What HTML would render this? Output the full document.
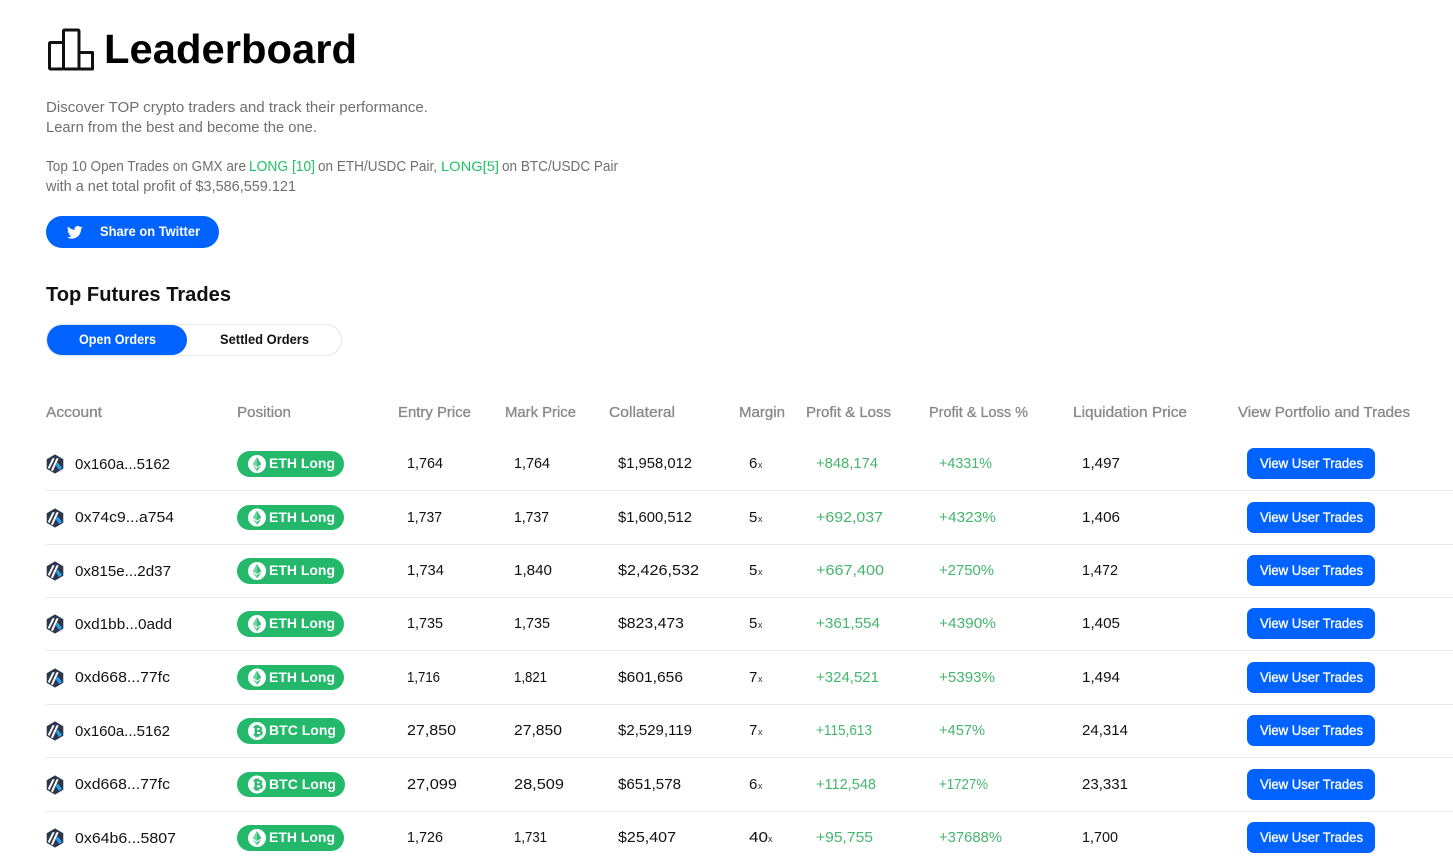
<!DOCTYPE html>
<html><head><meta charset="utf-8"><title>Leaderboard</title>
<style>
html,body{margin:0;padding:0;background:#fff;width:1453px;height:864px;overflow:hidden}
svg{display:block;font-family:"Liberation Sans",sans-serif}
text{font-size:15px;fill:#111;}
.g{fill:#6f6f6f}
.h{fill:#888;font-size:14.5px;stroke:#888;stroke-width:.3px}
.l{fill:#22c065}
.p{fill:#45b56e}
.w{fill:#fff;font-weight:bold;font-size:13.5px}
.vb{fill:#fff;font-size:13.5px;stroke:#fff;stroke-width:.35px}
.x{font-size:9px;fill:#333}
.d{fill:#e6e6e6}
.bt{fill:#0062ff}
.bg{fill:#24b86b}
</style></head><body>
<svg width="1453" height="864" viewBox="0 0 1453 864" xmlns="http://www.w3.org/2000/svg">
<defs>
<g id="arb"><path d="M0-9.6 8.3-4.8V4.8L0 9.6-8.3 4.8V-4.8Z" fill="#2d374b"/><path d="M2.5-1.5 7.2 4 4 6 .8 1Z" fill="#28a0f0"/><path d="M-2.5-5.8H-.3L-5.5 5-7.2 3.8Z" fill="#fff"/><path d="M1.5-5.8H3.7L-2.2 7.2-4 6.2Z" fill="#fff"/></g>
<g id="eth"><circle r="9" fill="#fff"/><path d="M0-7 0 3-4.4 .3Z" fill="#6fd6a2"/><path d="M0-7 4.4 .3 0 3Z" fill="#36bd79"/><path d="M0 4.2V7.4L-4.4 1.5Z" fill="#6fd6a2"/><path d="M0 4.2 4.4 1.5 0 7.4Z" fill="#36bd79"/></g>
<g id="btc"><circle r="9" fill="#fff"/><text x="-4.2" y="4.6" style="font-size:12.5px;font-weight:bold;fill:#2bb873;stroke:#2bb873;stroke-width:.5px">₿</text></g>
</defs>

<g fill="none" stroke="#111" stroke-width="3" stroke-linejoin="round"><rect x="49.500" y="42.500" width="14" height="26.500" rx="1"/><rect x="63.500" y="30" width="15.500" height="39" rx="1"/><path d="M79 52.500H92.500V69H79"/></g>
<text x="104" y="63" textLength="253" lengthAdjust="spacingAndGlyphs" style="font-size:41px;font-weight:bold;fill:#000">Leaderboard</text>

<text class="g" x="46" y="112" textLength="382" lengthAdjust="spacingAndGlyphs">Discover TOP crypto traders and track their performance.</text>
<text class="g" x="46" y="132" textLength="271" lengthAdjust="spacingAndGlyphs">Learn from the best and become the one.</text>
<text class="g" x="46" y="171" textLength="200" lengthAdjust="spacingAndGlyphs">Top 10 Open Trades on GMX are</text>
<text class="l" x="249" y="171" textLength="66" lengthAdjust="spacingAndGlyphs">LONG [10]</text>
<text class="g" x="318" y="171" textLength="119" lengthAdjust="spacingAndGlyphs">on ETH/USDC Pair,</text>
<text class="l" x="441" y="171" textLength="58" lengthAdjust="spacingAndGlyphs" style="font-size:14px">LONG[5]</text>
<text class="g" x="502" y="171" textLength="116" lengthAdjust="spacingAndGlyphs">on BTC/USDC Pair</text>
<text class="g" x="46" y="191" textLength="250" lengthAdjust="spacingAndGlyphs">with a net total profit of $3,586,559.121</text>

<rect class="bt" x="46" y="216" width="173" height="32" rx="16"/>
<path fill="#fff" transform="translate(67,224.500) scale(.65)" d="M23.953 4.57a10 10 0 01-2.825.775 4.958 4.958 0 002.163-2.723c-.951.555-2.005.959-3.127 1.184a4.92 4.92 0 00-8.384 4.482C7.69 8.095 4.067 6.13 1.64 3.162a4.822 4.822 0 00-.666 2.475c0 1.71.87 3.213 2.188 4.096a4.904 4.904 0 01-2.228-.616v.06a4.923 4.923 0 003.946 4.827 4.996 4.996 0 01-2.212.085 4.936 4.936 0 004.604 3.417 9.867 9.867 0 01-6.102 2.105c-.39 0-.779-.023-1.17-.067a13.995 13.995 0 007.557 2.209c9.053 0 13.998-7.496 13.998-13.985 0-.21 0-.42-.015-.63A9.935 9.935 0 0024 4.59z"/>
<text class="w" x="100" y="236" textLength="100" lengthAdjust="spacingAndGlyphs">Share on Twitter</text>

<text x="46" y="301" textLength="185" lengthAdjust="spacingAndGlyphs" style="font-size:20px;font-weight:bold;fill:#111">Top Futures Trades</text>

<rect x="46.500" y="324.500" width="295" height="31" rx="15.500" fill="#fff" stroke="#e6e6e6"/>
<rect class="bt" x="47" y="325" width="140" height="30" rx="15"/>
<text class="w" x="79" y="344" textLength="77" lengthAdjust="spacingAndGlyphs">Open Orders</text>
<text class="w" style="fill:#111" x="220" y="344" textLength="89" lengthAdjust="spacingAndGlyphs">Settled Orders</text>

<text class="h" x="46" y="417" textLength="56" lengthAdjust="spacingAndGlyphs">Account</text>
<text class="h" x="237" y="417" textLength="54" lengthAdjust="spacingAndGlyphs">Position</text>
<text class="h" x="398" y="417" textLength="73" lengthAdjust="spacingAndGlyphs">Entry Price</text>
<text class="h" x="505" y="417" textLength="71" lengthAdjust="spacingAndGlyphs">Mark Price</text>
<text class="h" x="609" y="417" textLength="66" lengthAdjust="spacingAndGlyphs">Collateral</text>
<text class="h" x="739" y="417" textLength="46" lengthAdjust="spacingAndGlyphs">Margin</text>
<text class="h" x="806" y="417" textLength="85" lengthAdjust="spacingAndGlyphs">Profit &amp; Loss</text>
<text class="h" x="929" y="417" textLength="99" lengthAdjust="spacingAndGlyphs">Profit &amp; Loss %</text>
<text class="h" x="1073" y="417" textLength="114" lengthAdjust="spacingAndGlyphs">Liquidation Price</text>
<text class="h" x="1238" y="417" textLength="172" lengthAdjust="spacingAndGlyphs">View Portfolio and Trades</text>

<rect class="d" x="46" y="490" width="1407" height="1"/>
<rect class="d" x="46" y="544" width="1407" height="1"/>
<rect class="d" x="46" y="597" width="1407" height="1"/>
<rect class="d" x="46" y="650" width="1407" height="1"/>
<rect class="d" x="46" y="704" width="1407" height="1"/>
<rect class="d" x="46" y="757" width="1407" height="1"/>
<rect class="d" x="46" y="811" width="1407" height="1"/>

<!-- row 1 -->
<use href="#arb" x="55" y="464"/>
<text x="75" y="469" textLength="95" lengthAdjust="spacingAndGlyphs">0x160a...5162</text>
<rect class="bg" x="237" y="451" width="107" height="26" rx="13"/><use href="#eth" x="257" y="464"/>
<text class="w" x="269" y="468" textLength="66" lengthAdjust="spacingAndGlyphs">ETH Long</text>
<text x="407" y="468" textLength="36" lengthAdjust="spacingAndGlyphs">1,764</text>
<text x="514" y="468" textLength="36" lengthAdjust="spacingAndGlyphs">1,764</text>
<text x="618" y="468" textLength="74" lengthAdjust="spacingAndGlyphs">$1,958,012</text>
<text x="749" y="468">6</text><text class="x" x="758" y="468">x</text>
<text class="p" x="816" y="468" textLength="62" lengthAdjust="spacingAndGlyphs">+848,174</text>
<text class="p" x="939" y="468" textLength="53" lengthAdjust="spacingAndGlyphs">+4331%</text>
<text x="1082" y="468" textLength="38" lengthAdjust="spacingAndGlyphs">1,497</text>
<rect class="bt" x="1247" y="448" width="128" height="31" rx="7"/>
<text class="vb" x="1260" y="468" textLength="103" lengthAdjust="spacingAndGlyphs">View User Trades</text>

<!-- row 2 -->
<use href="#arb" x="55" y="518"/>
<text x="75" y="522" textLength="99" lengthAdjust="spacingAndGlyphs">0x74c9...a754</text>
<rect class="bg" x="237" y="505" width="107" height="25" rx="12.500"/><use href="#eth" x="257" y="517.500"/>
<text class="w" x="269" y="522" textLength="66" lengthAdjust="spacingAndGlyphs">ETH Long</text>
<text x="407" y="522" textLength="35" lengthAdjust="spacingAndGlyphs">1,737</text>
<text x="514" y="522" textLength="35" lengthAdjust="spacingAndGlyphs">1,737</text>
<text x="618" y="522" textLength="74" lengthAdjust="spacingAndGlyphs">$1,600,512</text>
<text x="749" y="522">5</text><text class="x" x="758" y="522">x</text>
<text class="p" x="816" y="522" textLength="67" lengthAdjust="spacingAndGlyphs">+692,037</text>
<text class="p" x="939" y="522" textLength="57" lengthAdjust="spacingAndGlyphs">+4323%</text>
<text x="1082" y="522" textLength="38" lengthAdjust="spacingAndGlyphs">1,406</text>
<rect class="bt" x="1247" y="502" width="128" height="31" rx="7"/>
<text class="vb" x="1260" y="522" textLength="103" lengthAdjust="spacingAndGlyphs">View User Trades</text>

<!-- row 3 -->
<use href="#arb" x="55" y="571"/>
<text x="75" y="576" textLength="96" lengthAdjust="spacingAndGlyphs">0x815e...2d37</text>
<rect class="bg" x="237" y="558" width="107" height="26" rx="13"/><use href="#eth" x="257" y="571"/>
<text class="w" x="269" y="575" textLength="66" lengthAdjust="spacingAndGlyphs">ETH Long</text>
<text x="407" y="575" textLength="37" lengthAdjust="spacingAndGlyphs">1,734</text>
<text x="514" y="575" textLength="38" lengthAdjust="spacingAndGlyphs">1,840</text>
<text x="618" y="575" textLength="81" lengthAdjust="spacingAndGlyphs">$2,426,532</text>
<text x="749" y="575">5</text><text class="x" x="758" y="575">x</text>
<text class="p" x="816" y="575" textLength="68" lengthAdjust="spacingAndGlyphs">+667,400</text>
<text class="p" x="939" y="575" textLength="55" lengthAdjust="spacingAndGlyphs">+2750%</text>
<text x="1082" y="575" textLength="36" lengthAdjust="spacingAndGlyphs">1,472</text>
<rect class="bt" x="1247" y="555" width="128" height="31" rx="7"/>
<text class="vb" x="1260" y="575" textLength="103" lengthAdjust="spacingAndGlyphs">View User Trades</text>

<!-- row 4 -->
<use href="#arb" x="55" y="624"/>
<text x="75" y="629" textLength="97" lengthAdjust="spacingAndGlyphs">0xd1bb...0add</text>
<rect class="bg" x="237" y="611" width="107" height="26" rx="13"/><use href="#eth" x="257" y="624"/>
<text class="w" x="269" y="628" textLength="66" lengthAdjust="spacingAndGlyphs">ETH Long</text>
<text x="407" y="628" textLength="36" lengthAdjust="spacingAndGlyphs">1,735</text>
<text x="514" y="628" textLength="36" lengthAdjust="spacingAndGlyphs">1,735</text>
<text x="618" y="628" textLength="66" lengthAdjust="spacingAndGlyphs">$823,473</text>
<text x="749" y="628">5</text><text class="x" x="758" y="628">x</text>
<text class="p" x="816" y="628" textLength="64" lengthAdjust="spacingAndGlyphs">+361,554</text>
<text class="p" x="939" y="628" textLength="57" lengthAdjust="spacingAndGlyphs">+4390%</text>
<text x="1082" y="628" textLength="38" lengthAdjust="spacingAndGlyphs">1,405</text>
<rect class="bt" x="1247" y="608" width="128" height="31" rx="7"/>
<text class="vb" x="1260" y="628" textLength="103" lengthAdjust="spacingAndGlyphs">View User Trades</text>

<!-- row 5 -->
<use href="#arb" x="55" y="678"/>
<text x="75" y="682" textLength="95" lengthAdjust="spacingAndGlyphs">0xd668...77fc</text>
<rect class="bg" x="237" y="665" width="107" height="25" rx="12.500"/><use href="#eth" x="257" y="677.500"/>
<text class="w" x="269" y="682" textLength="66" lengthAdjust="spacingAndGlyphs">ETH Long</text>
<text x="407" y="682" textLength="33" lengthAdjust="spacingAndGlyphs">1,716</text>
<text x="514" y="682" textLength="33" lengthAdjust="spacingAndGlyphs">1,821</text>
<text x="618" y="682" textLength="65" lengthAdjust="spacingAndGlyphs">$601,656</text>
<text x="749" y="682">7</text><text class="x" x="758" y="682">x</text>
<text class="p" x="816" y="682" textLength="63" lengthAdjust="spacingAndGlyphs">+324,521</text>
<text class="p" x="939" y="682" textLength="56" lengthAdjust="spacingAndGlyphs">+5393%</text>
<text x="1082" y="682" textLength="38" lengthAdjust="spacingAndGlyphs">1,494</text>
<rect class="bt" x="1247" y="662" width="128" height="31" rx="7"/>
<text class="vb" x="1260" y="682" textLength="103" lengthAdjust="spacingAndGlyphs">View User Trades</text>

<!-- row 6 -->
<use href="#arb" x="55" y="731"/>
<text x="75" y="736" textLength="95" lengthAdjust="spacingAndGlyphs">0x160a...5162</text>
<rect class="bg" x="237" y="718" width="108" height="26" rx="13"/><use href="#btc" x="257" y="731"/>
<text class="w" x="269" y="735" textLength="67" lengthAdjust="spacingAndGlyphs">BTC Long</text>
<text x="407" y="735" textLength="49" lengthAdjust="spacingAndGlyphs">27,850</text>
<text x="514" y="735" textLength="48" lengthAdjust="spacingAndGlyphs">27,850</text>
<text x="618" y="735" textLength="74" lengthAdjust="spacingAndGlyphs">$2,529,119</text>
<text x="749" y="735">7</text><text class="x" x="758" y="735">x</text>
<text class="p" x="816" y="735" textLength="56" lengthAdjust="spacingAndGlyphs">+115,613</text>
<text class="p" x="939" y="735" textLength="46" lengthAdjust="spacingAndGlyphs">+457%</text>
<text x="1082" y="735" textLength="46" lengthAdjust="spacingAndGlyphs">24,314</text>
<rect class="bt" x="1247" y="715" width="128" height="31" rx="7"/>
<text class="vb" x="1260" y="735" textLength="103" lengthAdjust="spacingAndGlyphs">View User Trades</text>

<!-- row 7 -->
<use href="#arb" x="55" y="785"/>
<text x="75" y="789" textLength="95" lengthAdjust="spacingAndGlyphs">0xd668...77fc</text>
<rect class="bg" x="237" y="772" width="108" height="25" rx="12.500"/><use href="#btc" x="257" y="784.500"/>
<text class="w" x="269" y="789" textLength="67" lengthAdjust="spacingAndGlyphs">BTC Long</text>
<text x="407" y="789" textLength="50" lengthAdjust="spacingAndGlyphs">27,099</text>
<text x="514" y="789" textLength="50" lengthAdjust="spacingAndGlyphs">28,509</text>
<text x="618" y="789" textLength="63" lengthAdjust="spacingAndGlyphs">$651,578</text>
<text x="749" y="789">6</text><text class="x" x="758" y="789">x</text>
<text class="p" x="816" y="789" textLength="60" lengthAdjust="spacingAndGlyphs">+112,548</text>
<text class="p" x="939" y="789" textLength="49" lengthAdjust="spacingAndGlyphs">+1727%</text>
<text x="1082" y="789" textLength="46" lengthAdjust="spacingAndGlyphs">23,331</text>
<rect class="bt" x="1247" y="769" width="128" height="31" rx="7"/>
<text class="vb" x="1260" y="789" textLength="103" lengthAdjust="spacingAndGlyphs">View User Trades</text>

<!-- row 8 -->
<use href="#arb" x="55" y="838"/>
<text x="75" y="843" textLength="101" lengthAdjust="spacingAndGlyphs">0x64b6...5807</text>
<rect class="bg" x="237" y="825" width="107" height="26" rx="13"/><use href="#eth" x="257" y="838"/>
<text class="w" x="269" y="842" textLength="66" lengthAdjust="spacingAndGlyphs">ETH Long</text>
<text x="407" y="842" textLength="36" lengthAdjust="spacingAndGlyphs">1,726</text>
<text x="514" y="842" textLength="33" lengthAdjust="spacingAndGlyphs">1,731</text>
<text x="618" y="842" textLength="58" lengthAdjust="spacingAndGlyphs">$25,407</text>
<text x="749" y="842" textLength="19" lengthAdjust="spacingAndGlyphs">40</text><text class="x" x="768" y="842">x</text>
<text class="p" x="816" y="842" textLength="57" lengthAdjust="spacingAndGlyphs">+95,755</text>
<text class="p" x="939" y="842" textLength="63" lengthAdjust="spacingAndGlyphs">+37688%</text>
<text x="1082" y="842" textLength="36" lengthAdjust="spacingAndGlyphs">1,700</text>
<rect class="bt" x="1247" y="822" width="128" height="31" rx="7"/>
<text class="vb" x="1260" y="842" textLength="103" lengthAdjust="spacingAndGlyphs">View User Trades</text>
</svg>
</body></html>
